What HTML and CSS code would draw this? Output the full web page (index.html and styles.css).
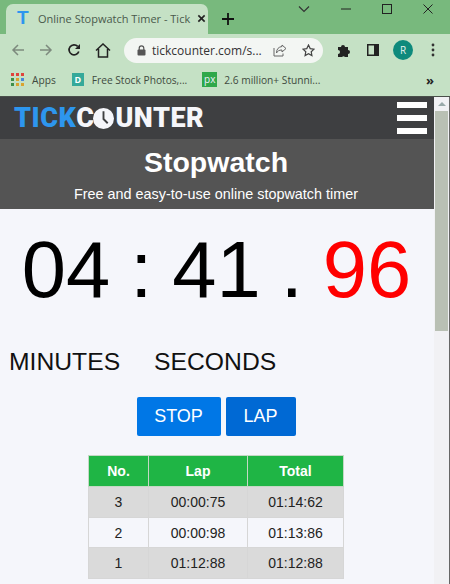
FILE: index.html
```html
<!DOCTYPE html>
<html lang="en">
<head>
  <meta charset="UTF-8">
  <meta name="viewport" content="width=device-width, initial-scale=1.0">
  <title>Online Stopwatch Timer - TickCounter</title>
  <link rel="stylesheet" href="styles.css">
</head>
<body>
  <div class="window">
    <!-- browser chrome -->
    <div class="tabstrip">
      <div class="tab">
        <span class="tab-favicon">T</span>
        <span class="tab-title">Online Stopwatch Timer - Tick</span>
        <svg class="tab-close" width="9" height="9" viewBox="0 0 10 10"><path d="M1.500 1.500l7 7M8.500 1.500l-7 7" stroke="#222" stroke-width="1.800" fill="none"/></svg>
      </div>
      <svg class="new-tab" width="12" height="12" viewBox="0 0 12 12"><path d="M6 0v12M0 6h12" stroke="#111" stroke-width="1.800"/></svg>
      <div class="window-controls">
        <svg width="12" height="8" viewBox="0 0 12 8"><path d="M1 1.500l5 5 5-5" stroke="#333" stroke-width="1.200" fill="none"/></svg>
        <svg width="10" height="2" viewBox="0 0 10 2"><path d="M0 1h10" stroke="#222" stroke-width="1"/></svg>
        <svg width="10" height="10" viewBox="0 0 10 10"><rect x="0.500" y="0.500" width="9" height="9" stroke="#222" fill="none"/></svg>
        <svg width="10" height="10" viewBox="0 0 10 10"><path d="M0.500 0.500l9 9M9.500 0.500l-9 9" stroke="#222" stroke-width="1" fill="none"/></svg>
      </div>
    </div>

    <div class="toolbar">
      <svg class="tool" width="14" height="14" viewBox="0 0 14 14"><path d="M13 7H2M7 2L2 7l5 5" stroke="#7d8a7e" stroke-width="1.500" fill="none"/></svg>
      <svg class="tool" width="14" height="14" viewBox="0 0 14 14"><path d="M1 7h11M7 2l5 5-5 5" stroke="#7d8a7e" stroke-width="1.500" fill="none"/></svg>
      <svg class="tool" width="14" height="14" viewBox="0 0 14 14"><path d="M11.800 8.500A5 5 0 1 1 10.700 3.400" stroke="#222" stroke-width="1.700" fill="none"/><path d="M13 1v5H8z" fill="#222"/></svg>
      <svg class="tool" width="16" height="15" viewBox="0 0 16 15"><path d="M1 7.500L8 1l7 6.500M3.500 6v8h9V6" stroke="#222" stroke-width="1.500" fill="none"/></svg>
      <div class="omnibox">
        <svg width="9" height="11" viewBox="0 0 9 11"><path d="M2.200 5V3.200a2.300 2.300 0 0 1 4.600 0V5" stroke="#555" stroke-width="1.200" fill="none"/><rect x="0.500" y="4.500" width="8" height="6" rx="1" fill="#555"/></svg>
        <span class="url">tickcounter.com/s...</span>
        <svg class="share" width="14" height="13" viewBox="0 0 14 13"><path d="M9 1l4 3.500L9 8V6C6 6 4.500 7 3.500 9c0-4 2-6 5.500-6.500zM1 4v8h9V9.500" stroke="#666" stroke-width="1" fill="none"/></svg>
        <svg width="13" height="13" viewBox="0 0 13 13"><path d="M6.500 1l1.700 3.600 3.800.5-2.800 2.600.7 3.900-3.400-1.900-3.400 1.900.7-3.900L1 5.100l3.800-.5z" stroke="#444" stroke-width="1.200" fill="none"/></svg>
      </div>
      <svg class="ext" width="14" height="14" viewBox="0 0 14 14"><path d="M1 4h3a2 2 0 0 1 4 0h3v3a2 2 0 0 1 0 4v3H8a2 2 0 0 0-3 0H1v-3a2 2 0 0 0 0-4z" fill="#222"/></svg>
      <svg class="side" width="12" height="12" viewBox="0 0 12 12"><rect x="0.750" y="0.750" width="10.500" height="10.500" fill="none" stroke="#222" stroke-width="1.500"/><rect x="7" y="1" width="4" height="10" fill="#222"/></svg>
      <span class="avatar">R</span>
      <svg class="kebab" width="4" height="14" viewBox="0 0 4 14"><circle cx="2" cy="2" r="1.400" fill="#333"/><circle cx="2" cy="7" r="1.400" fill="#333"/><circle cx="2" cy="12" r="1.400" fill="#333"/></svg>
    </div>

    <div class="bookmarks">
      <svg class="apps" width="13" height="13" viewBox="0 0 13 13">
        <rect width="3" height="3" fill="#e0433b"/><rect x="5" width="3" height="3" fill="#e0433b"/><rect x="10" width="3" height="3" fill="#e0433b"/>
        <rect y="5" width="3" height="3" fill="#3f8f4a"/><rect x="5" y="5" width="3" height="3" fill="#d9a32e"/><rect x="10" y="5" width="3" height="3" fill="#4a86d8"/>
        <rect y="10" width="3" height="3" fill="#3f8f4a"/><rect x="5" y="10" width="3" height="3" fill="#d9a32e"/><rect x="10" y="10" width="3" height="3" fill="#d9a32e"/>
      </svg>
      <span class="mark mark-apps">Apps</span>
      <span class="fav-d">D</span>
      <span class="mark mark-photos">Free Stock Photos,...</span>
      <span class="fav-px">px</span>
      <span class="mark">2.6 million+ Stunni...</span>
      <span class="more">»</span>
    </div>

    <!-- page -->
    <div class="viewport">
      <div class="page">
        <header class="site-header">
          <div class="logo"><span class="logo-tick">TICK</span><span class="logo-rest">C<svg class="logo-clock" width="21" height="21" viewBox="0 0 20 20"><circle cx="10" cy="10" r="10" fill="#f5f6fa"/><path d="M10 3v7.500l4 4" stroke="#3e3f41" stroke-width="1.800" fill="none"/></svg>UNTER</span></div>
          <div class="burger"><span></span><span></span><span></span></div>
        </header>
        <section class="hero">
          <h1>Stopwatch</h1>
          <p>Free and easy-to-use online stopwatch timer</p>
        </section>
        <div class="clock"><span>04</span><span>:</span><span>41</span><span>.</span><span class="hundredths">96</span></div>
        <div class="units"><span>MINUTES</span><span>SECONDS</span></div>
        <div class="buttons">
          <button class="btn btn-stop">STOP</button>
          <button class="btn btn-lap">LAP</button>
        </div>
        <table class="laps">
          <thead>
            <tr><th class="col-no">No.</th><th class="col-lap">Lap</th><th>Total</th></tr>
          </thead>
          <tbody>
            <tr><td>3</td><td>00:00:75</td><td>01:14:62</td></tr>
            <tr><td>2</td><td>00:00:98</td><td>01:13:86</td></tr>
            <tr><td>1</td><td>01:12:88</td><td>01:12:88</td></tr>
          </tbody>
        </table>
      </div>
      <div class="scrollbar">
        <span class="scroll-up"></span>
        <div class="scroll-thumb"></div>
      </div>
    </div>
  </div>
</body>
</html>
```

FILE: styles.css
```css
* {
  box-sizing: border-box;
}
body {
  margin: 0;
  width: 450px;
  height: 584px;
  overflow: hidden;
  font-family: "Liberation Sans", Arial, sans-serif;
  background: #f5f6fb;
}
.window {
  height: 584px;
  display: flex;
  flex-direction: column;
}

/* tabs */
.tabstrip {
  height: 34px;
  flex-shrink: 0;
  background: #78b97d;
  display: flex;
  align-items: flex-end;
  padding-left: 6px;
}
.tab {
  width: 202px;
  height: 30px;
  background: #c5e1c5;
  border-radius: 7px 7px 0 0;
  display: flex;
  align-items: center;
  padding: 0 10px 2px 11px;
}
.tab-favicon {
  width: 15px;
  font-size: 19px;
  font-weight: bold;
  color: #2d96ee;
  flex-shrink: 0;
}
.tab-title {
  margin-left: 6px;
  flex: 1;
  font-family: "Open Sans", sans-serif;
  font-size: 11px;
  color: #4a5a4c;
  white-space: nowrap;
}
.tab-close {
  margin-left: 7px;
  flex-shrink: 0;
}
.new-tab {
  margin: 0 0 9px 14px;
}
.window-controls {
  margin-left: auto;
  align-self: flex-start;
  display: flex;
  align-items: center;
  gap: 31px;
  height: 18px;
  padding-right: 17px;
}

/* toolbar */
.toolbar {
  height: 32px;
  flex-shrink: 0;
  background: #c5e1c5;
  display: flex;
  align-items: center;
  padding: 0 0 0 11px;
}
.tool {
  margin-right: 14px;
}
.omnibox {
  width: 199px;
  height: 25px;
  margin-left: -1px;
  border-radius: 13px;
  background: #f3f6f3;
  display: flex;
  align-items: center;
  padding: 0 8px 0 13px;
}
.url {
  margin-left: 6px;
  flex: 1;
  font-family: "Open Sans", sans-serif;
  font-size: 12px;
  color: #333;
  white-space: nowrap;
}
.share {
  margin-right: 15px;
}
.ext {
  margin-left: 14px;
}
.side {
  margin-left: 16px;
}
.avatar {
  margin-left: 14px;
  width: 20px;
  height: 20px;
  border-radius: 50%;
  background: #0e8a7c;
  color: #e6f2ee;
  font-family: "Open Sans", sans-serif;
  font-size: 10px;
  display: flex;
  align-items: center;
  justify-content: center;
}
.kebab {
  margin-left: 18px;
}

/* bookmarks */
.bookmarks {
  height: 30px;
  flex-shrink: 0;
  background: #c5e1c5;
  display: flex;
  align-items: center;
  padding: 0 16px 3px 11px;
  font-family: "Open Sans", sans-serif;
  font-size: 10.2px;
  color: #3f4a40;
}
.mark {
  white-space: nowrap;
}
.mark-apps {
  margin-left: 8px;
}
.fav-d {
  margin-left: 16px;
  width: 12px;
  height: 13px;
  background: #35a99a;
  color: #fff;
  font-size: 9px;
  font-weight: bold;
  text-align: center;
  line-height: 13px;
}
.mark-photos {
  margin-left: 8px;
}
.fav-px {
  margin-left: 15px;
  width: 15px;
  height: 15px;
  background: #2fa84a;
  color: #eef;
  font-size: 10px;
  line-height: 14px;
  text-align: center;
}
.fav-px + .mark {
  margin-left: 7px;
}
.more {
  margin-left: auto;
  font-size: 13px;
  font-weight: bold;
  color: #222;
}

/* page */
.viewport {
  flex: 1;
  display: flex;
  min-height: 0;
  border-top: 1px solid #4a4f4a;
}
.page {
  width: 434px;
  flex-shrink: 0;
  background: #f5f6fb;
}
.site-header {
  height: 42px;
  background: #3e3f41;
  display: flex;
  align-items: center;
  justify-content: space-between;
  padding: 0 7px 0 14px;
}
.logo {
  display: flex;
  align-items: center;
  font-family: "Roboto", sans-serif;
  font-weight: 900;
  font-size: 27px;
  letter-spacing: 0.5px;
  line-height: 1;
}
.logo-tick {
  color: #2d96ee;
}
.logo-rest {
  color: #f5f6fa;
  display: flex;
  align-items: center;
}
.logo-clock {
  margin: 0 1px 0 -1px;
}
.burger {
  width: 30px;
  display: flex;
  flex-direction: column;
  gap: 7px;
}
.burger span {
  height: 6px;
  background: #fff;
}
.hero {
  height: 70px;
  background: #545454;
  color: #fff;
  text-align: center;
  padding: 7px 2px 0 0;
}
.hero h1 {
  margin: 0;
  font-size: 28.500px;
  line-height: 33px;
}
.hero p {
  margin: 6px 0 0;
  font-size: 14.400px;
  line-height: 18px;
}
.clock {
  margin-top: 22px;
  display: flex;
  justify-content: center;
  gap: 20px;
  padding-right: 1px;
  font-size: 79.500px;
  line-height: 78px;
  color: #000;
}
.hundredths {
  color: #f00;
}
.units {
  margin-top: 39px;
  padding-left: 9px;
  display: flex;
  gap: 34px;
  font-size: 24.700px;
  line-height: 28px;
  color: #111;
}
.buttons {
  margin-top: 21px;
  padding-right: 2px;
  display: flex;
  justify-content: center;
  gap: 5px;
}
.btn {
  height: 39px;
  border: none;
  border-radius: 2px;
  color: #fff;
  font-family: inherit;
  font-size: 18px;
  padding: 0;
}
.btn-stop {
  width: 84px;
  background: #0077e6;
}
.btn-lap {
  width: 70px;
  background: #0069d4;
}
.laps {
  margin: 19px 0 0 88px;
  width: 256px;
  border-collapse: collapse;
  table-layout: fixed;
  font-size: 14px;
  color: #222;
}
.laps th {
  height: 31px;
  background: #1fb545;
  color: #fff;
  font-size: 14px;
  border: 1px solid #c4d8c4;
}
.col-no {
  width: 60px;
}
.col-lap {
  width: 99px;
}
.laps td {
  height: 30.700px;
  text-align: center;
  border: 1px solid #d6d6d6;
}
.laps tbody tr:nth-child(odd) td {
  background: #dadada;
}
.scrollbar {
  width: 16px;
  background: #f1f1f4;
  border-right: 1px solid #666;
}
.scroll-up {
  display: block;
  margin: 5px auto 0;
  width: 0;
  border-left: 4px solid transparent;
  border-right: 4px solid transparent;
  border-bottom: 4px solid #9aa;
}
.scroll-thumb {
  margin: 5px 1px 0 1px;
  height: 220px;
  background: #b9c0b4;
}
```
